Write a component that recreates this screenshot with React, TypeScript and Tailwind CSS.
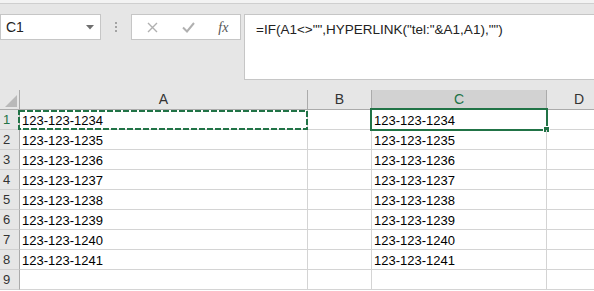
import React from "react";

const rows = [
  "123-123-1234",
  "123-123-1235",
  "123-123-1236",
  "123-123-1237",
  "123-123-1238",
  "123-123-1239",
  "123-123-1240",
  "123-123-1241",
  "",
];

const font = { fontFamily: '"Liberation Sans", Arial, sans-serif' };

function NameBox() {
  return (
    <div className="flex h-[26px] w-[101px] items-center justify-between border border-[#c6c6c6] bg-white pl-[5px] pr-[6px]">
      <span className="text-[14px] text-[#222]">C1</span>
      <svg width="8" height="5" viewBox="0 0 8 5">
        <path d="M0 0h8L4 4.5z" fill="#6f6f6f" />
      </svg>
    </div>
  );
}

function FormulaButtons() {
  return (
    <div className="flex h-[26px] w-[110px] items-center border border-[#c6c6c6] bg-white">
      <div className="flex w-[37px] justify-center pl-[4px]">
        <svg width="11" height="11" viewBox="0 0 11 11">
          <path d="M1 1l9 9M10 1l-9 9" stroke="#b0b0b0" strokeWidth="1.4" />
        </svg>
      </div>
      <div className="flex w-[37px] justify-center pl-[4px]">
        <svg width="13" height="11" viewBox="0 0 13 11">
          <path d="M1 5.5l4 4 7-8.5" stroke="#b0b0b0" strokeWidth="2" fill="none" />
        </svg>
      </div>
      <div className="flex w-[36px] justify-center pl-[2px]">
        <span
          className="text-[14px] italic text-[#555]"
          style={{ fontFamily: '"Liberation Serif", "Times New Roman", serif' }}
        >
          fx
        </span>
      </div>
    </div>
  );
}

export default function App() {
  return (
    <div className="h-[291px] w-[594px] overflow-hidden bg-white" style={font}>
      {/* ribbon / formula bar */}
      <div className="h-[90px] bg-[#e6e6e6]">
        <div className="h-[4px] border-b border-[#cfcfcf] bg-[#f3f3f3]" />
        <div className="flex items-start pt-[10px]">
          <NameBox />
          <div className="flex w-[30px] flex-col items-center gap-[2px] pt-[8px]">
            <div className="h-[2px] w-[2px] bg-[#a3a3a3]" />
            <div className="h-[2px] w-[2px] bg-[#a3a3a3]" />
            <div className="h-[2px] w-[2px] bg-[#a3a3a3]" />
          </div>
          <FormulaButtons />
          <div className="ml-[3px] h-[66px] flex-1 border border-r-0 border-[#c6c6c6] bg-white pl-[11px] pt-[5px] text-[13.5px] text-[#222]">
            =IF(A1&lt;&gt;"",HYPERLINK("tel:"&amp;A1,A1),"")
          </div>
        </div>
      </div>

      {/* grid */}
      <div className="grid grid-cols-[20px_288px_64px_175px_1fr] text-[13px]">
        {/* header row */}
        <div className="relative h-[20px] border-r border-b border-[#ababab] bg-[#e6e6e6]">
          <svg className="absolute right-[2px] bottom-[2px]" width="12" height="12" viewBox="0 0 12 12">
            <path d="M12 0v12H0z" fill="#b9b9b9" />
          </svg>
        </div>
        <div className="flex h-[20px] items-center justify-center border-r border-b border-[#ababab] bg-[#e6e6e6] text-[14px] text-[#333]">A</div>
        <div className="flex h-[20px] items-center justify-center border-r border-b border-[#ababab] bg-[#e6e6e6] text-[14px] text-[#333]">B</div>
        <div className="flex h-[20px] items-center justify-center border-r border-b-2 border-r-[#ababab] border-b-[#217346] bg-[#d2d2d2] text-[14px] text-[#217346]">C</div>
        <div className="flex h-[20px] items-center border-b border-[#ababab] bg-[#e6e6e6] pl-[27px] text-[14px] text-[#333]">D</div>

        {rows.map((v, i) => (
          <React.Fragment key={i}>
            <div
              className={
                i === 0
                  ? "flex h-[20px] items-center border-r border-b border-r-[#ababab] border-b-[#d0d0d0] bg-[#e6e6e6] pl-[3px] text-[#217346]"
                  : "flex h-[20px] items-center border-r border-b border-r-[#ababab] border-b-[#d0d0d0] bg-[#e6e6e6] pl-[3px] text-[#333]"
              }
            >
              {i + 1}
            </div>
            <div className="relative flex h-[20px] items-center border-r border-b border-[#d4d4d4] pl-[2px] pt-[2px] text-black">
              {v}
              {i === 0 && (
                <svg className="absolute -left-[2px] top-0" width="290" height="20" viewBox="0 0 290 20">
                  <rect x="1" y="1" width="288" height="18" fill="none" stroke="#217346" strokeWidth="2" strokeDasharray="6 2" />
                </svg>
              )}
            </div>
            <div className="h-[20px] border-r border-b border-[#d4d4d4]" />
            <div className="relative flex h-[20px] items-center border-r border-b border-[#d4d4d4] pl-[2px] pt-[2px] text-black">
              {v}
              {i === 0 && (
                <>
                  <div className="absolute -top-[2px] -left-[2px] -right-[2px] -bottom-[2px] border-2 border-[#217346]" />
                  <div className="absolute -right-[4px] -bottom-[4px] h-[7px] w-[7px] border border-white bg-[#217346]" />
                </>
              )}
            </div>
            <div className="h-[20px] border-b border-[#d4d4d4]" />
          </React.Fragment>
        ))}
      </div>
    </div>
  );
}
